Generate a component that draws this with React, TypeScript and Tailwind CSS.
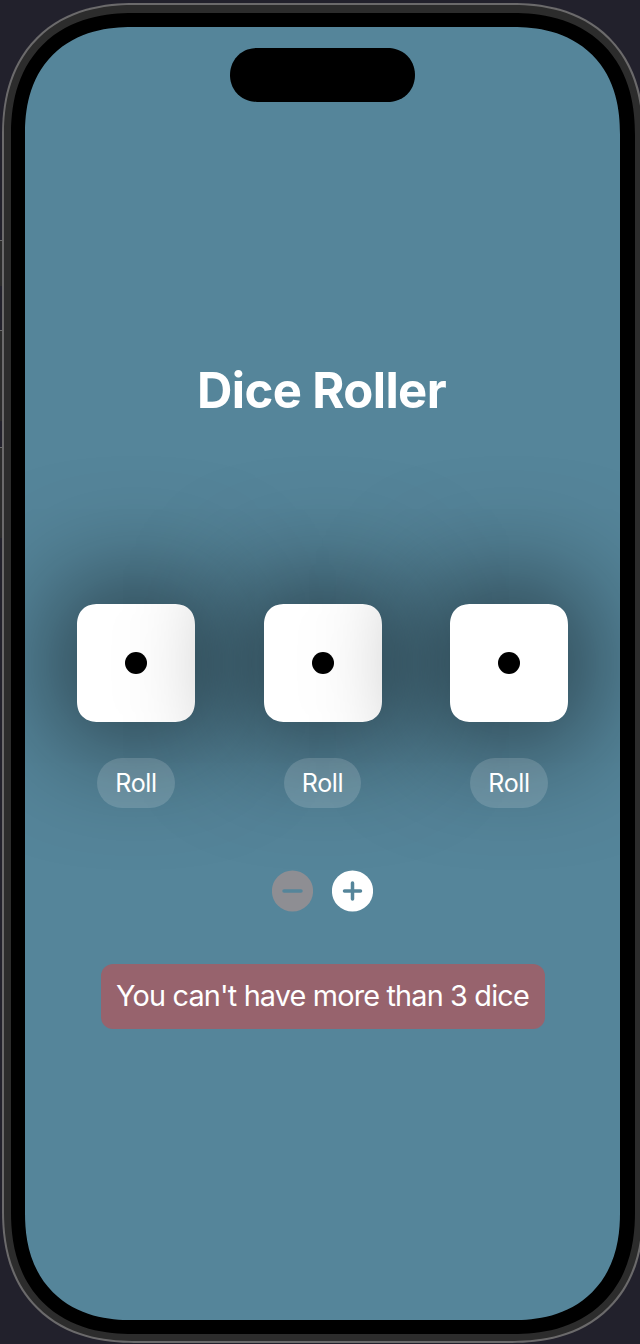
const SMOOTH = "[corner-shape:superellipse(1.2)]";

function Die() {
  return (
    <div className="flex h-[118px] w-[118px] items-center justify-center rounded-[21px] bg-white shadow-[0_0_128px_rgba(0,0,0,0.96)] [corner-shape:superellipse(1.2)]">
      <span className="h-[22px] w-[22px] rounded-full bg-black" />
    </div>
  );
}

function DieColumn() {
  return (
    <div className="flex w-[118px] flex-col items-center gap-9">
      <Die />
      <button
        type="button"
        className="relative flex h-[50.5px] w-[77.5px] items-center justify-center rounded-full bg-white/15 pt-px text-white"
      >
        <span className="text-[25px] leading-none tracking-[-0.35px]">Roll</span>
      </button>
    </div>
  );
}

function SideButtons() {
  return (
    <div className="flex w-[2px] shrink-0 flex-col pt-[240px]">
      <div className="h-[46px] border-t border-[#6a6a6a] bg-[#2b2b2b]" />
      <div className="mt-[44px] h-[91px] border-t border-[#6a6a6a] bg-[#2b2b2b]" />
      <div className="mt-[26px] h-[91px] border-t border-[#6a6a6a] bg-[#2b2b2b]" />
    </div>
  );
}

export default function App() {
  return (
    <div className="flex h-[1344px] w-[640px] overflow-hidden bg-[#22212c] font-[Inter,sans-serif]">
      <SideButtons />
      <div
        className={`mt-[3px] h-[1340px] w-[642px] shrink-0 rounded-[132px] border-2 border-[#6b6a6b] bg-[#2c2c2c] px-[7px] pt-[8px] pb-[7px] ${SMOOTH}`}
      >
        <div className={`h-full w-full rounded-[122px] bg-black px-[14px] py-[14px] ${SMOOTH}`}>
          <main
            className={`flex h-[1293px] w-[595px] flex-col items-center overflow-hidden rounded-[107px] bg-[#55859a] ${SMOOTH}`}
          >
            <div className="mt-[21px] h-[54px] w-[185px] shrink-0 rounded-[27px] bg-black [corner-shape:superellipse(1.04)]" />
            <h1 className="mt-[259px] pr-[2px] text-[49px] leading-[60px] font-bold tracking-[-0.6px] text-white">
              Dice Roller
            </h1>
            <div className="mt-[182.5px] flex gap-[68.5px]">
              <DieColumn />
              <DieColumn />
              <DieColumn />
            </div>
            <div className="mt-[62px] flex gap-[19px]">
              <button type="button" aria-label="Remove die">
                <svg width="41" height="42" viewBox="0 0 41 42">
                  <circle cx="20.5" cy="21" r="20.6" fill="#8e8e93" />
                  <path d="M12 21H29" stroke="#55859a" strokeWidth="3.5" strokeLinecap="round" />
                </svg>
              </button>
              <button type="button" aria-label="Add die">
                <svg width="41" height="42" viewBox="0 0 41 42">
                  <circle cx="20.5" cy="21" r="20.6" fill="#fff" />
                  <path d="M12.5 21H28.5M20.5 13V29" stroke="#55859a" strokeWidth="3.5" strokeLinecap="round" />
                </svg>
              </button>
            </div>
            <p className="mt-[51.5px] flex h-[65px] w-[444px] items-center justify-center rounded-[12px] bg-[#97636d] pt-px text-[28.8px] leading-none tracking-[-0.82px] whitespace-nowrap text-white">
              You can't have more than 3 dice
            </p>
          </main>
        </div>
      </div>
    </div>
  );
}
